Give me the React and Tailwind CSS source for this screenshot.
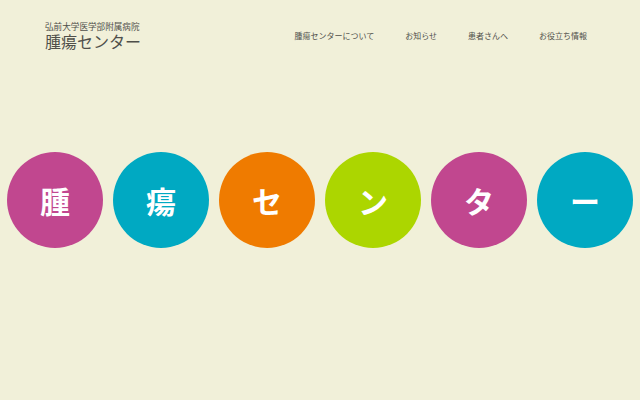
import React from 'react';

const font = { fontFamily: '"Noto Sans CJK JP", "Noto Sans", sans-serif' };

const circles = [
  { ch: '腫', bg: 'bg-[#c1478f]' },
  { ch: '瘍', bg: 'bg-[#00a9c2]' },
  { ch: 'セ', bg: 'bg-[#ef7b00]' },
  { ch: 'ン', bg: 'bg-[#acd600]' },
  { ch: 'タ', bg: 'bg-[#c1478f]' },
  { ch: 'ー', bg: 'bg-[#00a9c2]' },
];

const navItems = ['腫瘍センターについて', 'お知らせ', '患者さんへ', 'お役立ち情報'];

export default function App() {
  return (
    <div className="w-[640px] h-[400px] bg-[#f1f0d9] flex flex-col overflow-hidden" style={font}>
      {/* header */}
      <header className="flex items-start justify-between pl-[45px] pr-[53px] pt-[21px]">
        <div className="flex flex-col text-[#4f4f4a]">
          <span className="text-[8.6px] leading-[11px]">弘前大学医学部附属病院</span>
          <span className="text-[16px] leading-[19px]">腫瘍センター</span>
        </div>
        <nav className="flex gap-[31px] pt-[9px]">
          {navItems.map((item) => (
            <a key={item} className="text-[8px] leading-[12px] text-[#4f4f4a]">
              {item}
            </a>
          ))}
        </nav>
      </header>

      {/* title circles */}
      <div className="flex justify-center gap-[10px] mt-[101px]">
        {circles.map((c, i) => (
          <div
            key={i}
            className={`w-[96px] h-[96px] rounded-full flex items-center justify-center ${c.bg}`}
          >
            <span className="text-white text-[30px] font-bold leading-none">{c.ch}</span>
          </div>
        ))}
      </div>
    </div>
  );
}
